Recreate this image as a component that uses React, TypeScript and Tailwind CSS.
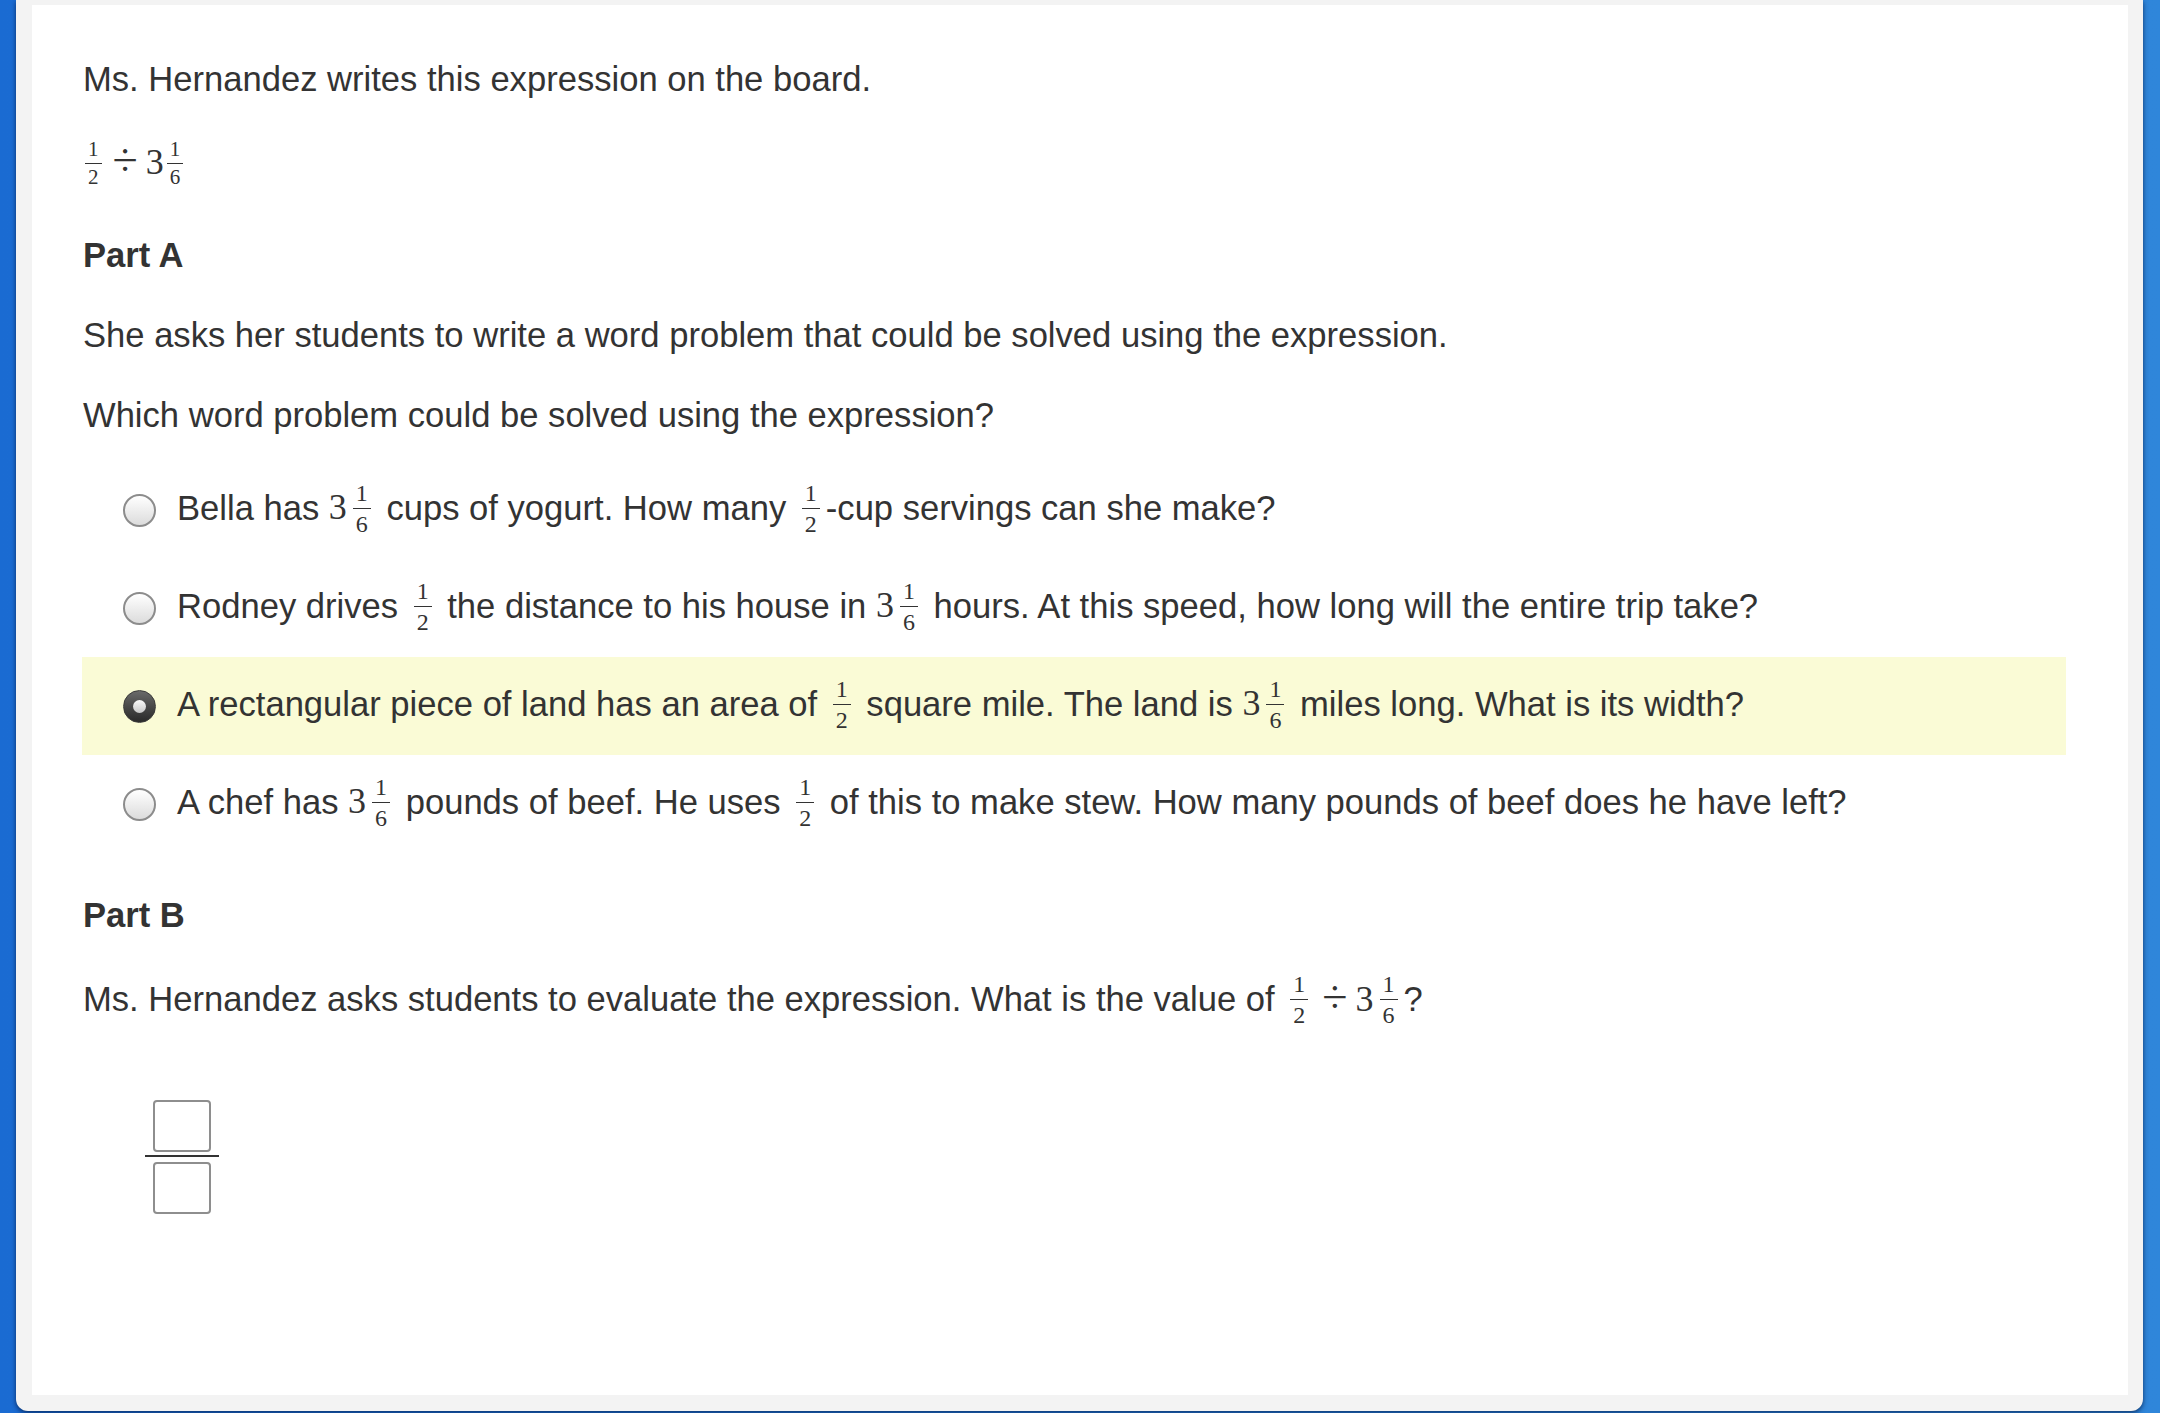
const serif = "font-['Liberation_Serif','DejaVu_Serif',serif]";

type FracProps = { n: string; d: string; small?: boolean };
const Frac = ({ n, d, small }: FracProps) => {
  return (
    <span
      className={`${serif} ${
        small ? "text-[21px] mx-[3px]" : "text-[24px] mx-[6px]"
      } inline-flex flex-col items-center align-middle leading-none relative top-[-2px]`}
    >
      <span className="px-[3px] pb-[3px]">{n}</span>
      <span className="w-full border-t-[1.5px] border-[#333]" />
      <span className="px-[3px] pt-[3px]">{d}</span>
    </span>
  );
};

const Mixed = ({ small }: { small?: boolean }) => {
  return (
    <span className="whitespace-nowrap">
      <span className={`${serif} text-[36px]`}>3</span>
      <Frac n="1" d="6" small={small} />
    </span>
  );
};

const Div = () => {
  return (
    <span className={`${serif} text-[46px] leading-none mx-[8px] relative top-[2px]`}>÷</span>
  );
};

const Radio = ({ checked }: { checked?: boolean }) => {
  if (checked) {
    return (
      <span className="w-[33px] h-[33px] rounded-full bg-linear-to-b from-[#6a6a6a] to-[#2a2a2a] border border-[#3a3a3a] flex items-center justify-center shrink-0">
        <span className="w-[13px] h-[13px] rounded-full bg-linear-to-b from-[#fafafa] to-[#c8c8c8]" />
      </span>
    );
  }
  return (
    <span className="w-[33px] h-[33px] rounded-full border-2 border-[#8c8c8c] bg-linear-to-b from-[#ffffff] to-[#dcdcdc] shrink-0" />
  );
};

type OptionProps = { checked?: boolean; children: React.ReactNode };
const Option = ({ checked, children }: OptionProps) => {
  return (
    <div
      className={`h-[98px] flex items-center pl-[41px] ${checked ? "bg-[#fafbd6]" : ""}`}
    >
      <Radio checked={checked} />
      <span className="ml-[21px] leading-[40px]">{children}</span>
    </div>
  );
};

const App = () => {
  return (
    <div className="w-[2160px] h-[1413px] bg-linear-to-r from-[#1a6bd2] to-[#2f86da] overflow-hidden">
      <div className="ml-[16px] w-[2127px] h-[1411px] bg-[#f3f3f3] rounded-b-[12px] pt-[5px] pl-[16px] pr-[15px] shadow-[0_2px_5px_rgba(0,20,60,0.7)]">
        <div className="h-[1390px] bg-white pt-[54px] pl-[51px] pr-[62px] text-[34.6px] text-[#333] font-['Liberation_Sans',Arial,sans-serif]">
          <p className="leading-[40px]">Ms. Hernandez writes this expression on the board.</p>

          <div className="mt-[39px] h-[50px] flex items-center">
            <span className="leading-[40px] -ml-[1px]">
              <Frac n="1" d="2" small />
              <Div />
              <Mixed small />
            </span>
          </div>

          <p className="mt-[47px] leading-[40px] font-bold">Part A</p>
          <p className="mt-[40px] leading-[40px]">
            She asks her students to write a word problem that could be solved using the expression.
          </p>
          <p className="mt-[40px] leading-[40px]">Which word problem could be solved using the expression?</p>

          <div className="mt-[26px] -ml-[1px]">
            <Option>
              Bella has <Mixed /> cups of yogurt. How many <Frac n="1" d="2" />
              -cup servings can she make?
            </Option>
            <Option>
              Rodney drives <Frac n="1" d="2" /> the distance to his house in <Mixed /> hours. At this speed,
              how long will the entire trip take?
            </Option>
            <Option checked>
              A rectangular piece of land has an area of <Frac n="1" d="2" /> square mile. The land is{" "}
              <Mixed /> miles long. What is its width?
            </Option>
            <Option>
              A chef has <Mixed /> pounds of beef. He uses <Frac n="1" d="2" /> of this to make stew. How
              many pounds of beef does he have left?
            </Option>
          </div>

          <p className="mt-[42px] leading-[40px] font-bold">Part B</p>
          <div className="mt-[46px] h-[40px] flex items-center">
            <span className="leading-[40px]">
              Ms. Hernandez asks students to evaluate the expression. What is the value of{" "}
              <Frac n="1" d="2" />
              <Div />
              <Mixed />?
            </span>
          </div>

          <div className="mt-[79px] ml-[62px] w-[74px] flex flex-col items-center">
            <div className="w-[58px] h-[52px] border-2 border-[#8e8e8e] rounded-[4px]" />
            <div className="mt-[3px] w-full h-[2px] bg-[#333]" />
            <div className="mt-[5px] w-[58px] h-[52px] border-2 border-[#8e8e8e] rounded-[4px]" />
          </div>
        </div>
      </div>
    </div>
  );
};

export default App;
